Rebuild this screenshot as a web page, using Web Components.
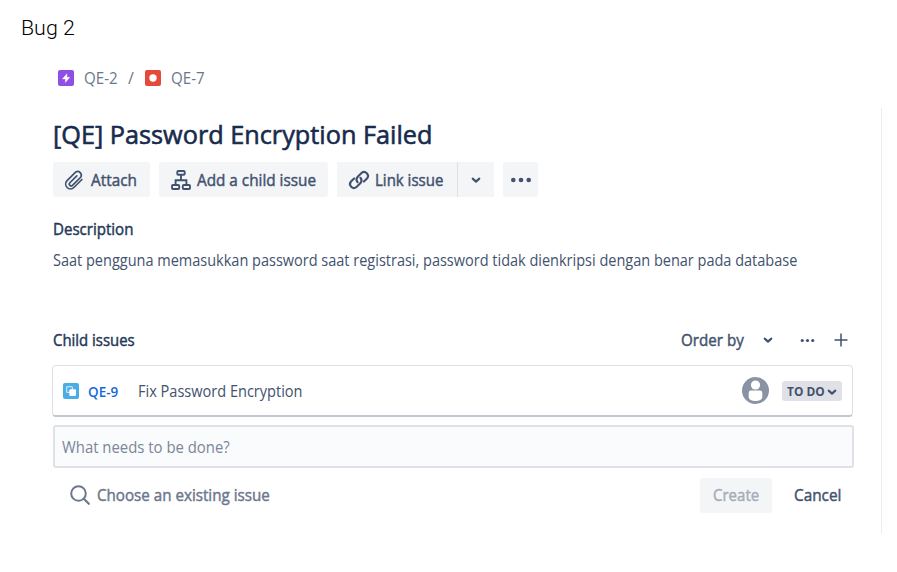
<!DOCTYPE html>
<html lang="id"><head><meta charset="utf-8"><title>Bug 2</title>
<style>
html,body{margin:0;background:#fff}
body{width:897px;height:572px;overflow:hidden;font-family:"Open Sans","Noto Sans",sans-serif;font-size:16px;color:#42526e;--medium:.45px}
</style></head><body>
<bug-report></bug-report>
<script>
function define(name, html, setup){
  const t=document.createElement('template');t.innerHTML=html;
  customElements.define(name,class extends HTMLElement{
    constructor(){super();this.attachShadow({mode:'open'}).append(t.content.cloneNode(true));}
    connectedCallback(){if(setup)setup(this,this.shadowRoot);}
  });
}
// Text label condensed or widened to the advance width in its "w" attribute.
define('fit-text',`<style>:host{display:block;flex:none;height:24px;line-height:24px;white-space:nowrap}
span{display:inline-block;transform-origin:0 50%}</style><span><slot></slot></span>`,(el,root)=>{
  const s=root.querySelector('span'),w=+el.getAttribute('w');
  el.style.width=w+'px';
  s.style.transform='scaleX('+w/s.offsetWidth+')';
});
const icons={
epic:[16,'<rect width="16" height="16" rx="2" fill="#904ee2"/><path d="M8.9 3.7v3.6h2.9L7.4 12.5V8.9H4.5z" fill="#fff" stroke="#fff" stroke-width=".4" stroke-linejoin="round"/>'],
bug:[16,'<rect width="16" height="16" rx="2" fill="#e5493a"/><circle cx="8" cy="8" r="3.7" fill="#fff"/>'],
subtask:[16,'<rect width="16" height="16" rx="2" fill="#4bade8"/><rect x="3.6" y="3.6" width="5.8" height="5.8" rx="1" fill="none" stroke="#c5e5f8" stroke-width="1.2"/><rect x="6.3" y="6.3" width="6.7" height="6.7" rx="1.2" fill="#fff"/>'],
clip:[20,'<path transform="translate(9.600 10) rotate(45)" d="M4.800-5.500V5.800a4.800 4.800 0 0 1-9.600 0V-6.500a3.700 3.700 0 0 1 7.100 0V5.300a1.700 1.700 0 0 1-3.700 0V-4.500" fill="none" stroke="currentColor" stroke-width="1.700" stroke-linecap="round"/>'],
tree:[20,'<g fill="none" stroke="currentColor" stroke-width="1.9"><rect x="6.3" y="1" width="7.4" height="3.8" rx="1"/><rect x="1" y="15" width="7.2" height="4" rx="1"/><rect x="11.8" y="15" width="7.2" height="4" rx="1"/><path d="M10 5v5M4.6 15v-4.7h10.8V15"/></g>'],
link:[20,'<g fill="none" stroke="currentColor" stroke-width="2.1" stroke-linecap="round"><path d="M8.6 12.2A4 4 0 0 1 8.5 7l4-4a3.9 3.9 0 0 1 5.5 5.5l-3.1 3.1"/><path d="M11.4 7.8a4 4 0 0 1 .1 5.2l-4 4A3.9 3.9 0 0 1 2 11.500l3.100-3.100"/></g>'],
chevron:[10,'<path d="M1.700 3.600 5 6.600l3.300-3" fill="none" stroke="currentColor" stroke-width="2.100" stroke-linecap="round" stroke-linejoin="round"/>'],
more:[22,'<g fill="currentColor"><circle cx="3.300" cy="11" r="2.300"/><circle cx="11" cy="11" r="2.300"/><circle cx="18.700" cy="11" r="2.300"/></g>'],
plus:[14,'<path d="M7 .5v13M.5 7h13" stroke="currentColor" stroke-width="1.500" fill="none"/>'],
search:[20,'<circle cx="8.500" cy="8.500" r="7.300" fill="none" stroke="currentColor" stroke-width="2"/><path d="m13.800 13.800 5 5" stroke="currentColor" stroke-width="2.200" stroke-linecap="round"/>'],
user:[27,'<circle cx="13.500" cy="13.500" r="13.500" fill="#8993a4"/><circle cx="13.500" cy="8" r="4.600" fill="#fff"/><path d="M6.700 15.800a2.300 2.300 0 0 1 2.300-2.300h9a2.300 2.300 0 0 1 2.300 2.300v4.500c0 2.300-3.500 3.700-6.800 3.700s-6.800-1.400-6.800-3.700z" fill="#fff"/>']};
define('ui-icon','<style>:host{display:block;flex:none}svg{display:block;overflow:visible}</style>',(el,root)=>{
  const [n,body]=icons[el.getAttribute('name')],s=el.getAttribute('size')||n;
  root.innerHTML+=`<svg width="${s}" height="${s}" viewBox="0 0 ${n} ${n}">${body}</svg>`;
});
define('ui-button',`<style>:host{display:flex;flex:none;align-items:center;box-sizing:border-box;height:35px;background:#f4f5f7;border-radius:3px;-webkit-text-stroke:var(--medium);color:#42526e}</style><slot></slot>`);
define('bread-crumbs',`<style>:host{display:flex;align-items:center;height:24px;padding-left:58px;color:#6b778c}
.a{margin-left:10px}.s{margin:0 11px 0 10px}</style>
<ui-icon name="epic"></ui-icon><fit-text class="a" w="34">QE-2</fit-text><fit-text class="s" w="6">/</fit-text><ui-icon name="bug"></ui-icon><fit-text class="a" w="34">QE-7</fit-text>`);
define('issue-toolbar',`<style>:host{display:flex;gap:9px;padding-left:53px;height:35px}
.split{display:flex;gap:1px;background:#dfe1e6;border-radius:3px}.split ui-button:first-child{border-radius:3px 0 0 3px}.split ui-button:last-child{border-radius:0 3px 3px 0}
ui-icon{margin-right:6px}.m{justify-content:center}.m ui-icon{margin:0}</style>
<ui-button style="width:97px;padding-left:12px"><ui-icon name="clip"></ui-icon><fit-text w="46">Attach</fit-text></ui-button>
<ui-button style="width:169px;padding-left:12px"><ui-icon name="tree"></ui-icon><fit-text w="118.500">Add a child issue</fit-text></ui-button>
<div class="split"><ui-button style="width:120px;padding-left:12px"><ui-icon name="link"></ui-icon><fit-text w="68.500">Link issue</fit-text></ui-button><ui-button class="m" style="width:36px"><ui-icon name="chevron"></ui-icon></ui-button></div>
<ui-button class="m" style="width:35px"><ui-icon name="more"></ui-icon></ui-button>`);
define('section-bar',`<style>:host{display:flex;align-items:center;height:24px;padding-left:53px;-webkit-text-stroke:var(--medium)}
.t{color:#253858}.r{display:flex;align-items:center;margin-left:auto;margin-right:33px}</style>
<fit-text class="t" w="82">Child issues</fit-text>
<div class="r"><fit-text w="62.500">Order by</fit-text><ui-icon name="chevron" style="margin-left:19px"></ui-icon><ui-icon name="more" size="15" style="margin:0 19.500px 0 27px"></ui-icon><ui-icon name="plus"></ui-icon></div>`);
define('child-issue',`<style>:host{display:flex;align-items:center;box-sizing:border-box;width:801px;height:52px;margin-left:52px;padding:0 10px;border:1px solid #dfe1e6;border-bottom:2px solid #c1c7d0;border-radius:4px}
.k{font-size:13.500px;font-weight:600;color:#1868db;margin:2px 20px 0 9px}
.st{display:flex;align-items:center;box-sizing:border-box;width:60px;height:20px;margin-left:13px;padding-left:5px;background:#dfe1e6;border-radius:3px;font-size:12.500px;font-weight:700}
.st fit-text{position:relative;top:1px}.st ui-icon{margin:2px 0 0 2px}</style>
<ui-icon name="subtask"></ui-icon><fit-text class="k" w="30">QE-9</fit-text><fit-text w="164.500">Fix Password Encryption</fit-text>
<ui-icon name="user" style="margin-left:auto"></ui-icon><div class="st"><fit-text w="38">TO DO</fit-text><ui-icon name="chevron"></ui-icon></div>`);
define('new-issue',`<style>:host{display:block;margin-left:53px;width:801px}
.in{display:flex;align-items:center;box-sizing:border-box;height:43px;padding:1px 0 0 7px;border:2px solid #dfe1e6;border-radius:3px;background:#fafbfc;color:#7a869a}
.row{display:flex;align-items:center;height:35px;margin-top:9.500px;padding-left:17px;-webkit-text-stroke:var(--medium);color:#6b778c}
.row>fit-text{margin-left:7px}.row ui-button:first-of-type{margin-left:auto;color:#a5adba}.row ui-button:last-child{background:none}</style>
<div class="in"><fit-text w="167.500">What needs to be done?</fit-text></div>
<div class="row"><ui-icon name="search"></ui-icon><fit-text w="172.500">Choose an existing issue</fit-text>
<ui-button style="width:72px;padding-left:13px"><fit-text w="46">Create</fit-text></ui-button><ui-button style="width:82px;padding-left:22px"><fit-text w="47">Cancel</fit-text></ui-button></div>`);
define('bug-report',`<style>:host{display:flex;flex-direction:column;width:897px;height:572px}
.b{font:300 21px/24px Roboto,"Liberation Sans",sans-serif;color:#000;padding:16px 0 0 20.500px}
bread-crumbs{margin-top:26px}
.p{margin-top:18px;box-sizing:border-box;width:882px;height:426px;border-right:1px solid #ebecf0}
.h{margin:14px 0 0 53px;font-size:26px;-webkit-text-stroke:.6px;color:#172b4d}
issue-toolbar{margin-top:16px}.d{margin:20px 0 0 53px;-webkit-text-stroke:var(--medium);color:#253858}.x{margin:7px 0 0 52.500px}
section-bar{margin-top:56px}child-issue{margin-top:13px}new-issue{margin-top:8px}</style>
<div class="b"><fit-text w="54">Bug 2</fit-text></div>
<bread-crumbs></bread-crumbs>
<div class="p"><div style="display:flow-root"><fit-text class="h" w="379">[QE] Password Encryption Failed</fit-text></div>
<issue-toolbar></issue-toolbar>
<fit-text class="d" w="80">Description</fit-text><fit-text class="x" w="744">Saat pengguna memasukkan password saat registrasi, password tidak dienkripsi dengan benar pada database</fit-text>
<section-bar></section-bar><child-issue></child-issue><new-issue></new-issue></div>`);
</script></body></html>
